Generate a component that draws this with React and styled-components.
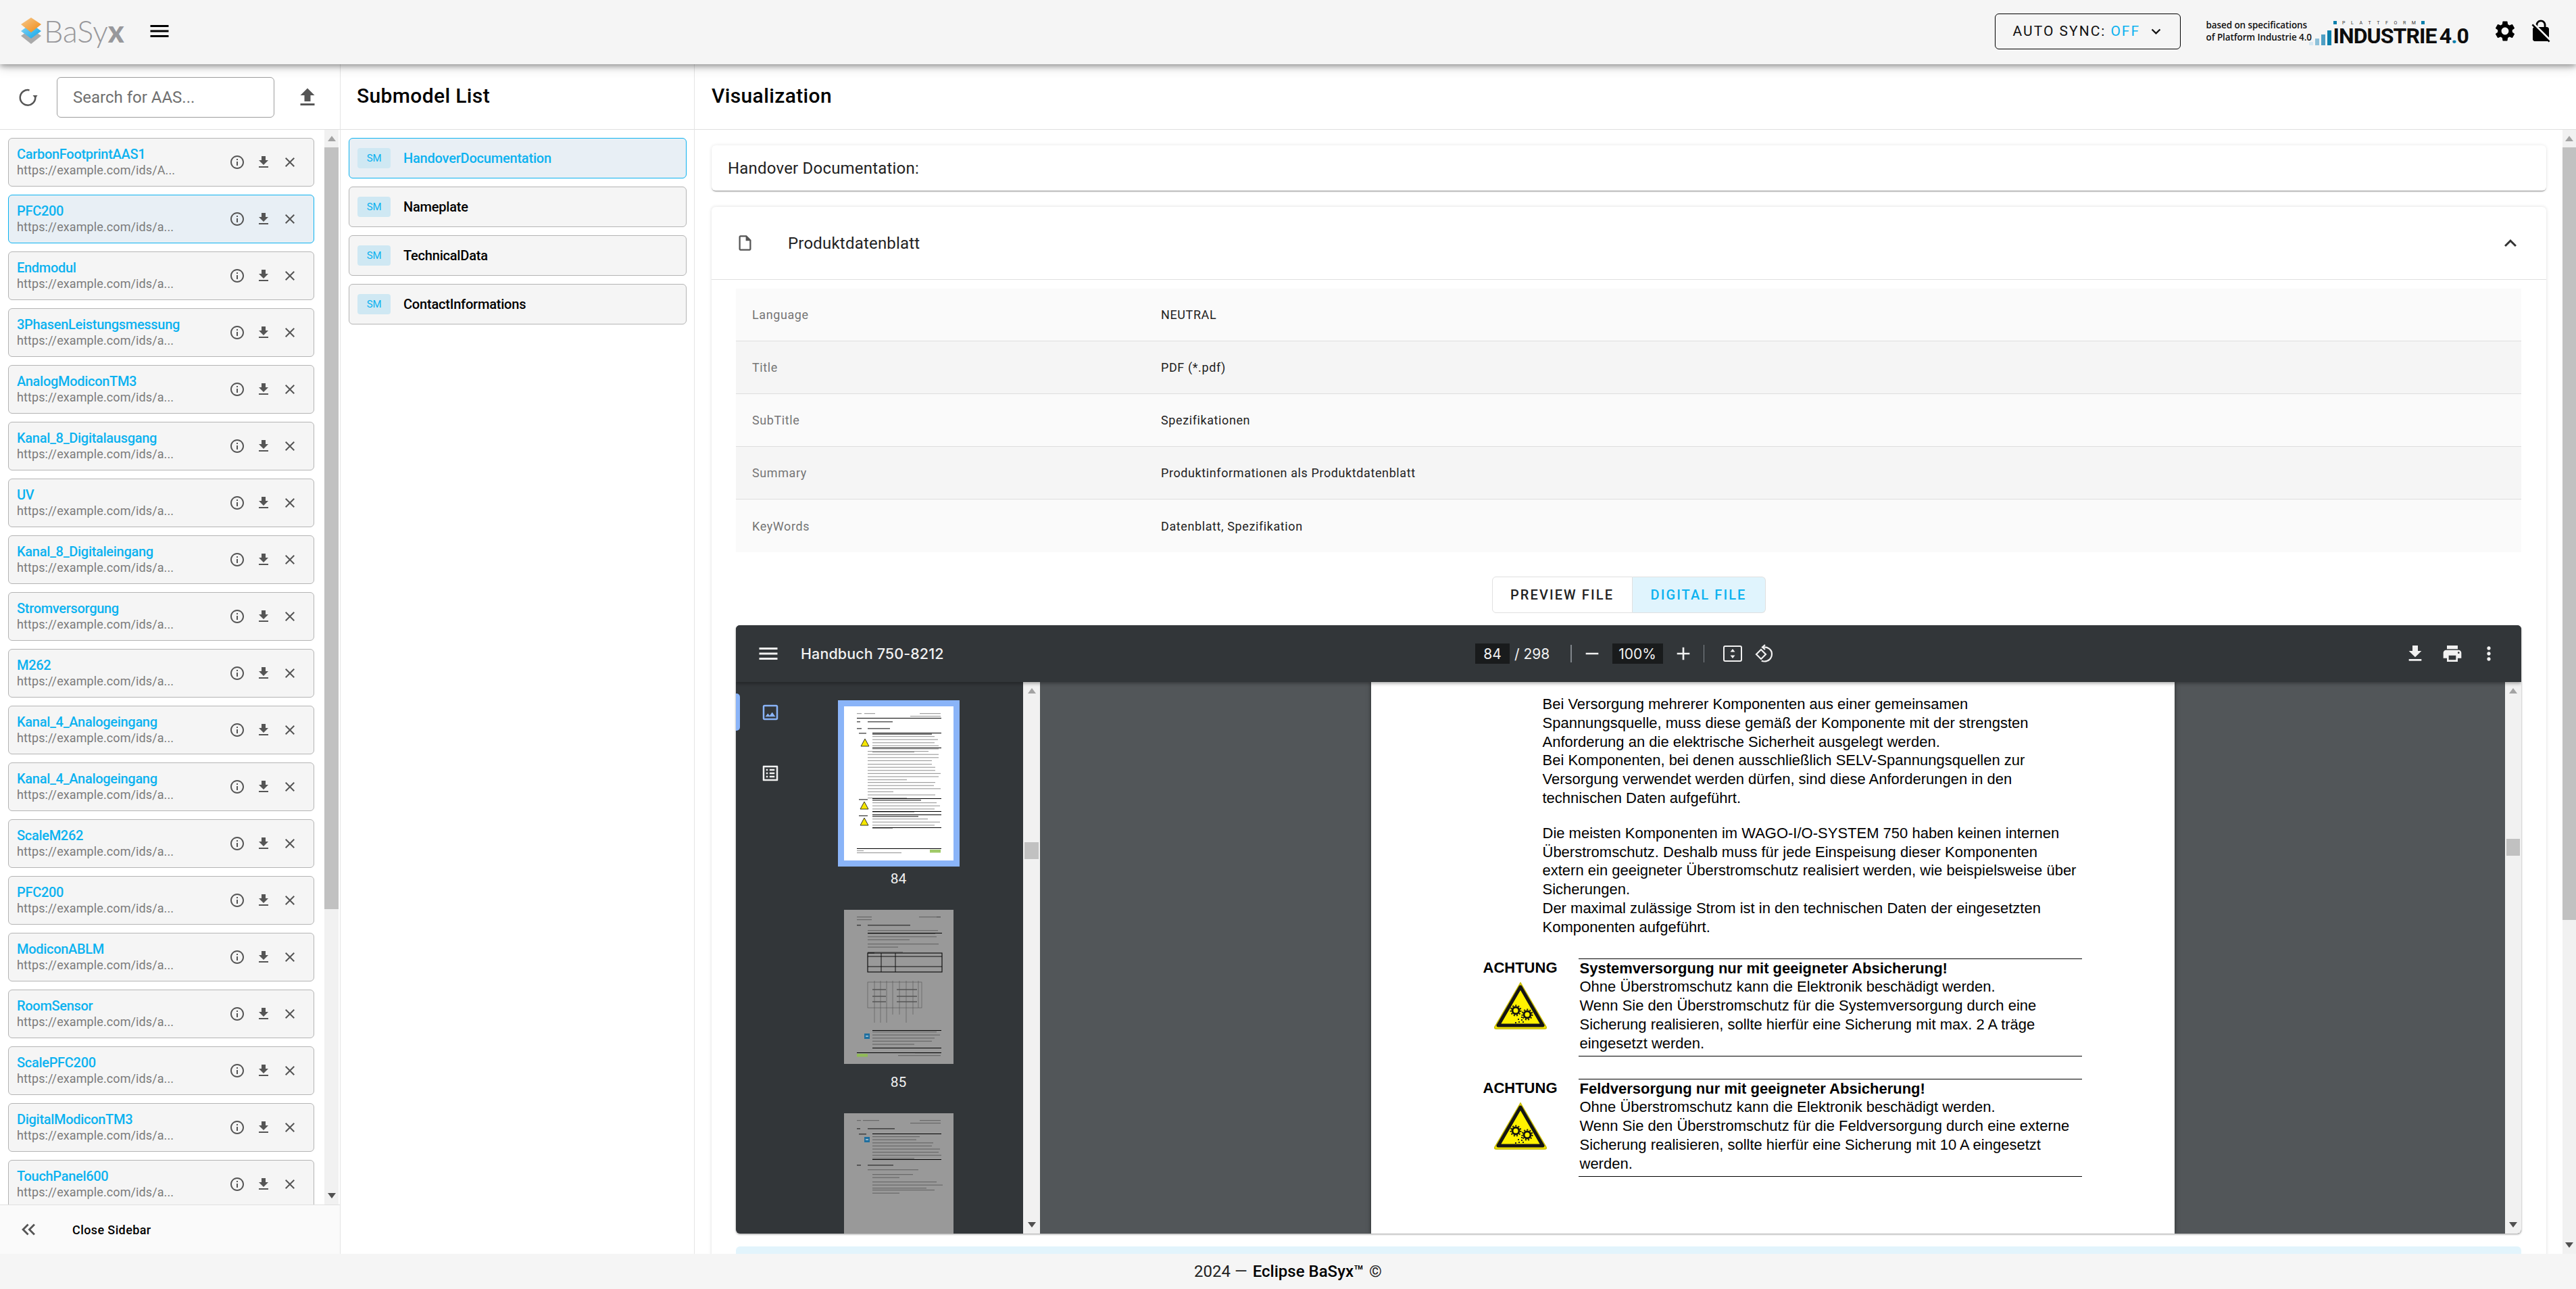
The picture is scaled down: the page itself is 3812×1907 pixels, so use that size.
import styled, { createGlobalStyle } from 'styled-components'
import {
  MdMenu, MdFileUpload, MdFileDownload, MdInfoOutline, MdClose, MdSettings, MdNoEncryption,
  MdKeyboardArrowDown, MdExpandLess, MdOutlineInsertDriveFile, MdKeyboardDoubleArrowLeft, MdPrint, MdMoreVert,
  MdOutlineImage, MdOutlineListAlt, MdRemove, MdAdd,
} from 'react-icons/md'

const PRIMARY = '#0cb2f0'

const Global = createGlobalStyle`
  html, body { margin: 0; padding: 0; background: #fff; }
  body { font-family: Roboto, "Liberation Sans", sans-serif; color: #000; }
  * { box-sizing: border-box; }
`

const Shell = styled.div`
  width: 3812px;
  height: 1907px;
  display: flex;
  flex-direction: column;
  overflow: hidden;
`

// top bar
const TopBar = styled.header`
  height: 95px;
  flex: none;
  display: flex;
  align-items: center;
  background: #f5f5f5;
  box-shadow: 0 3px 8px rgba(0, 0, 0, .35), 0 6px 16px rgba(0, 0, 0, .12);
  position: relative;
  z-index: 2;
  padding: 0 34px 3px 31px;
`
const LogoWrap = styled.div`
  display: flex;
  align-items: center;
  width: 187px;
`
const LogoText = styled.span`
  font-family: Lato, sans-serif;
  font-weight: 300;
  font-size: 45px;
  line-height: 1;
  color: #98989b;
  margin-left: 4px;
  b { font-weight: 900; }
`
const MenuButton = styled(MdMenu)`
  font-size: 36px;
  color: #000;
`
const Spacer = styled.div`
  flex: 1;
`
const SyncButton = styled.div`
  width: 275px;
  height: 53px;
  border: 1.5px solid #000;
  border-radius: 6px;
  display: flex;
  align-items: center;
  padding-left: 26px;
  font-size: 21px;
  font-weight: 400;
  letter-spacing: 2px;
  color: #111;
  margin-right: 38px;
  white-space: nowrap;
  span { color: ${PRIMARY}; margin-left: 7px; }
  svg { font-size: 27px; margin-left: 10px; }
`
const SpecText = styled.div`
  font-family: "Open Sans", sans-serif;
  font-weight: 600;
  font-size: 13.5px;
  line-height: 18px;
  color: #111;
  width: 152px;
  white-space: nowrap;
  letter-spacing: -.1px;
`
const I40Wrap = styled.div`
  display: flex;
  align-items: flex-end;
  height: 44px;
  margin-right: 36px;
`
const I40Bars = styled.div`
  display: flex;
  align-items: flex-end;
  gap: 3px;
  height: 24px;
  margin-bottom: 1px;
  margin-right: 3px;
`
const I40Bar = styled.i`
  display: block;
  width: 6px;
  height: ${p => p.$h}px;
  background: ${p => p.$c};
`
const I40Stack = styled.div`
  display: flex;
  flex-direction: column;
`
const I40Small = styled.div`
  display: flex;
  align-items: center;
  justify-content: space-between;
  font-size: 7px;
  height: 9px;
  width: 136px;
  color: #333;
  i { display: block; width: 5px; height: 5px; background: #0b7fab; }
`
const I40Main = styled.div`
  font-family: Roboto, sans-serif;
  font-weight: 700;
  font-size: 32px;
  line-height: 30px;
  letter-spacing: -.9px;
  white-space: nowrap;
  color: #0d0d0d;
  em { font-style: normal; color: #0b7fab; }
  span { margin-left: 4px; }
`
const BarIcon = styled.span`
  display: flex;
  font-size: 36px;
  margin-left: ${p => p.$ml || 0}px;
  color: #000;
`

// columns
const Body = styled.div`
  flex: 1;
  min-height: 0;
  display: flex;
`
const Sidebar = styled.aside`
  width: 504px;
  flex: none;
  display: flex;
  flex-direction: column;
  border-right: 1.5px solid #e4e4e4;
`
const SideTop = styled.div`
  height: 97px;
  flex: none;
  display: flex;
  align-items: center;
  border-bottom: 1.5px solid #e0e0e0;
  padding-top: 1px;
`
const RefreshWrap = styled.span`
  display: flex;
  width: 30px;
  margin: 0 3px 0 26px;
  flex: none;
  color: #555;
`
const SearchBox = styled.div`
  width: 322px;
  height: 60px;
  margin-left: 25px;
  border: 1.5px solid #9e9e9e;
  border-radius: 6px;
  display: flex;
  align-items: center;
  padding-left: 23px;
  font-size: 24px;
  color: #6f6f6f;
`
const UploadIcon = styled(MdFileUpload)`
  font-size: 36px;
  color: #555;
  margin-left: 31px;
`
const SideMiddle = styled.div`
  flex: 1;
  min-height: 0;
  display: flex;
`
const AasList = styled.div`
  flex: 1;
  min-width: 0;
  overflow: hidden;
  padding: 12px 15px 0 12px;
  display: flex;
  flex-direction: column;
  gap: 12px;
`
const AasCard = styled.div`
  flex: none;
  height: 72px;
  border-radius: 6px;
  border: 1.5px solid ${p => (p.$active ? PRIMARY : '#b4b4b4')};
  background: ${p => (p.$active ? '#e8eff5' : '#f5f5f5')};
  display: flex;
  align-items: center;
  padding-left: 12px;
`
const AasText = styled.div`
  width: 250px;
  flex: none;
  min-width: 0;
`
const AasName = styled.div`
  font-size: 20px;
  font-weight: 500;
  line-height: 24px;
  letter-spacing: -.3px;
  color: ${PRIMARY};
  white-space: nowrap;
`
const AasUrl = styled.div`
  font-size: 18px;
  line-height: 24px;
  letter-spacing: .1px;
  color: #7b7b7b;
  white-space: nowrap;
  overflow: hidden;
`
const AasActions = styled.div`
  display: flex;
  align-items: center;
  margin-left: 64px;
  gap: 15px;
  color: #555;
  font-size: 24px;
  svg { display: block; }
`
const SideBottom = styled.div`
  height: 73px;
  flex: none;
  background: #fafafa;
  border-top: 1.5px solid #e0e0e0;
  display: flex;
  align-items: center;
  font-size: 18px;
  font-weight: 500;
  letter-spacing: .4px;
  svg { font-size: 34px; color: #555; margin-left: 25px; margin-right: 48px; }
`

const SubmodelCol = styled.section`
  width: 524px;
  flex: none;
  display: flex;
  flex-direction: column;
  border-right: 1.5px solid #e4e4e4;
`
const ColTitle = styled.div`
  height: 97px;
  flex: none;
  display: flex;
  align-items: center;
  border-bottom: 1.5px solid #e0e0e0;
  padding: 0 0 3px ${p => p.$pl}px;
  font-size: 30px;
  font-weight: 500;
  letter-spacing: .37px;
`
const SubmodelList = styled.div`
  padding: 12px 11px 0 12px;
  display: flex;
  flex-direction: column;
  gap: 12px;
`
const SubmodelCard = styled.div`
  height: 60px;
  border-radius: 6px;
  border: 1.5px solid ${p => (p.$active ? PRIMARY : '#b4b4b4')};
  background: ${p => (p.$active ? '#e8eff5' : '#f5f5f5')};
  color: ${p => (p.$active ? PRIMARY : '#000')};
  display: flex;
  align-items: center;
  padding-left: 12px;
  font-size: 20px;
  font-weight: 500;
  letter-spacing: -.2px;
`
const SmChip = styled.span`
  width: 49px;
  height: 30px;
  border-radius: 4px;
  background: #cfe8f3;
  color: ${PRIMARY};
  font-size: 15px;
  font-weight: 400;
  display: flex;
  align-items: center;
  justify-content: center;
  margin-right: 19px;
`

// scroll rails
const Rail = styled.div`
  width: ${p => p.$w}px;
  flex: none;
  display: flex;
  flex-direction: column;
  background: #f1f1f1;
  margin-right: ${p => p.$mr || 0}px;
`
const RailArrow = styled.div`
  height: 26px;
  flex: none;
  display: flex;
  align-items: center;
  justify-content: center;
  &::before {
    content: '';
    border-left: 6px solid transparent;
    border-right: 6px solid transparent;
    ${p => (p.$down ? 'border-top' : 'border-bottom')}: 8px solid ${p => (p.$dim ? '#a3a3a3' : '#505050')};
  }
`
const RailGap = styled.div`
  flex: ${p => (p.$h ? 'none' : 1)};
  height: ${p => p.$h || 0}px;
`
const RailThumb = styled.div`
  flex: none;
  height: ${p => p.$h}px;
  margin: 0 ${p => p.$inset || 0}px;
  background: #c1c1c1;
`

// main
const Main = styled.main`
  flex: 1;
  min-width: 0;
  display: flex;
  flex-direction: column;
`
const MainScroll = styled.div`
  flex: 1;
  min-height: 0;
  display: flex;
`
const Content = styled.div`
  flex: 1;
  min-width: 0;
  overflow: hidden;
  padding: 23px 24px 0 25px;
  display: flex;
  flex-direction: column;
`
const TitleCard = styled.div`
  height: 67px;
  flex: none;
  border-radius: 6px;
  background: #fff;
  box-shadow: 0 2px 2px -1px rgba(0,0,0,.45), 0 0 5px rgba(0,0,0,.1);
  display: flex;
  align-items: center;
  padding-left: 24px;
  font-size: 24px;
  color: #222;
  letter-spacing: .2px;
`
const DocCard = styled.div`
  margin-top: 24px;
  flex: none;
  border-radius: 6px 6px 0 0;
  background: #fff;
  box-shadow: 0 0 5px rgba(0,0,0,.14);
  padding-bottom: 30px;
`
const DocHead = styled.div`
  height: 108px;
  display: flex;
  align-items: center;
  border-bottom: 1.5px solid #e0e0e0;
  padding-left: 36px;
  padding-right: 36px;
  font-size: 24px;
  color: #222;
  letter-spacing: .2px;
  svg:first-child { font-size: 27px; color: #555; margin-right: 50px; }
  svg:last-child { font-size: 36px; color: #333; margin-left: auto; margin-right: -1px; }
`
const DocBody = styled.div`
  padding: 13px 37px 0 36px;
  display: flex;
  flex-direction: column;
`
const PropTable = styled.div`
  display: flex;
  flex-direction: column;
`
const PropRow = styled.div`
  height: 78px;
  display: grid;
  grid-template-columns: 605px 1fr;
  align-items: center;
  padding-left: 24px;
  background: ${p => (p.$alt ? '#f5f5f5' : '#fafafa')};
  border-bottom: ${p => (p.$last ? 'none' : '1.5px solid #dedede')};
  font-size: 18px;
  letter-spacing: .6px;
`
const PropLabel = styled.span`
  color: #757575;
`
const PropValue = styled.span`
  color: #222;
`
const ToggleRow = styled.div`
  display: flex;
  justify-content: center;
  margin: 36px 0 18px;
`
const ToggleBtn = styled.div`
  height: 54px;
  width: ${p => p.$w}px;
  display: flex;
  align-items: center;
  justify-content: center;
  font-size: 20px;
  font-weight: 500;
  letter-spacing: 2.1px;
  border: 1.5px solid #e0e0e0;
  color: ${p => (p.$on ? PRIMARY : '#222')};
  background: ${p => (p.$on ? '#e0f4fd' : '#fff')};
  border-radius: ${p => (p.$on ? '0 6px 6px 0' : '6px 0 0 6px')};
  border-left: ${p => (p.$on ? 'none' : '1.5px solid #e0e0e0')};
`
const InfoStrip = styled.div`
  margin-top: 19px;
  height: 50px;
  border-radius: 6px;
  background: #e2f4fc;
`

// pdf viewer
const Viewer = styled.div`
  height: 900px;
  border-radius: 6px;
  overflow: hidden;
  display: flex;
  flex-direction: column;
  background: #323639;
  box-shadow: 0 1px 3px rgba(0,0,0,.4);
`
const PdfBar = styled.div`
  height: 84px;
  flex: none;
  display: flex;
  align-items: center;
  color: #f1f1f1;
  position: relative;
  z-index: 1;
  box-shadow: 0 2px 5px rgba(0,0,0,.35);
  background: #323639;
  font-family: Inter, Roboto, sans-serif;
`
const PdfTitle = styled.div`
  font-size: 21.5px;
  font-weight: 500;
  width: 998px;
  margin-left: 30px;
  white-space: nowrap;
  letter-spacing: .1px;
`
const PdfMenu = styled(MdMenu)`
  font-size: 36px;
  margin-left: 30px;
  flex: none;
`
const PdfField = styled.span`
  width: ${p => p.$w}px;
  height: 30px;
  margin-left: ${p => p.$ml || 0}px;
  background: #191b1c;
  display: flex;
  align-items: center;
  justify-content: center;
  font-size: 21px;
  flex: none;
`
const PdfText = styled.span`
  font-size: 21px;
  margin-left: 7px;
  width: 83px;
  flex: none;
`
const PdfSep = styled.i`
  display: block;
  width: 1.5px;
  height: 26px;
  background: #80868b;
  flex: none;
  margin: 0 ${p => p.$mr || 0}px 0 ${p => p.$ml || 0}px;
`
const PdfIcon = styled.span`
  display: flex;
  font-size: ${p => p.$size || 30}px;
  margin-left: ${p => p.$ml || 0}px;
  margin-right: ${p => p.$mr || 0}px;
  flex: none;
  color: #f1f1f1;
`
const PdfBody = styled.div`
  flex: 1;
  min-height: 0;
  display: flex;
`
const PdfSide = styled.div`
  width: 425px;
  flex: none;
  display: flex;
  overflow: hidden;
`
const PdfTabs = styled.div`
  width: 102px;
  flex: none;
  padding-top: 17px;
  display: flex;
  flex-direction: column;
  gap: 35px;
`
const PdfTab = styled.div`
  height: 55px;
  position: relative;
  display: flex;
  align-items: center;
  justify-content: center;
  font-size: 30px;
  color: ${p => (p.$on ? '#8ab4f8' : '#f1f1f1')};
  &::before {
    content: '';
    display: ${p => (p.$on ? 'block' : 'none')};
    position: absolute;
    left: 0;
    top: 0;
    bottom: 0;
    width: 6px;
    border-radius: 0 5px 5px 0;
    background: #8ab4f8;
  }
`
const ThumbCol = styled.div`
  flex: 1;
  min-width: 0;
  padding: 27px 46px 0 0;
  display: flex;
  flex-direction: column;
  align-items: center;
`
const ThumbFrame = styled.div`
  border: 9px solid ${p => (p.$on ? '#8ab4f8' : 'transparent')};
  flex: none;
  line-height: 0;
`
const ThumbLabel = styled.div`
  height: 36px;
  margin-bottom: 19px;
  flex: none;
  display: flex;
  align-items: center;
  justify-content: center;
  font-size: 21px;
  color: #f1f1f1;
`
const PdfPane = styled.div`
  flex: 1;
  min-width: 0;
  background: #525659;
  display: flex;
  justify-content: center;
  overflow: hidden;
`
const PdfPage = styled.div`
  width: 1189px;
  flex: none;
  background: #fff;
  box-shadow: 0 0 6px rgba(0,0,0,.5);
  padding: 19px 137px 0 166px;
  font-family: "Liberation Sans", Arial, sans-serif;
  font-size: 22px;
  line-height: 27.8px;
  color: #000;
  white-space: nowrap;
`
const PageParagraph = styled.p`
  margin: 0 0 24px 88px;
`
const Notice = styled.div`
  display: grid;
  grid-template-columns: 110px 1fr;
  column-gap: 31px;
  margin-top: ${p => p.$mt}px;
`
const NoticeSide = styled.div`
  display: flex;
  flex-direction: column;
  align-items: center;
  font-weight: 700;
  svg { margin-top: 7px; }
`
const NoticeBody = styled.div`
  border-top: 1px solid #000;
  border-bottom: 1px solid #000;
  padding-left: 2px;
  height: 145px;
  b { display: block; }
`

const Footer = styled.footer`
  height: 52px;
  flex: none;
  background: #f5f5f5;
  display: flex;
  align-items: center;
  justify-content: center;
  font-size: 24px;
  color: #222;
  b { font-weight: 500; color: #000; margin: 0 8px; }
`

function BasyxMark() {
  return (
    <svg width="30" height="40" viewBox="0 0 30 40">
      <defs>
        <linearGradient id="org" x1="0" y1="0" x2="1" y2="1">
          <stop offset="0" stopColor="#f6c98e" />
          <stop offset="1" stopColor="#f08a12" />
        </linearGradient>
        <linearGradient id="blu" x1="0" y1="0" x2="1" y2="1">
          <stop offset="0" stopColor="#8ed6f5" />
          <stop offset="1" stopColor="#0ba5e8" />
        </linearGradient>
      </defs>
      <path d="M15 17 L30 27 L15 39 L0 27 Z" fill="#a9a9a9" />
      <path d="M15 9 L30 20 L15 31 L0 20 Z" fill="url(#blu)" />
      <path d="M15 0 L30 10 L15 22 L0 10 Z" fill="url(#org)" />
    </svg>
  )
}

function RefreshGlyph() {
  return (
    <svg width="30" height="30" viewBox="0 0 36 36" fill="none" stroke="currentColor" strokeWidth="3">
      <path d="M21 5.3 A13.5 13.5 0 1 0 31.5 18" />
      <path d="M27 14.5 L31.5 20 L35.5 14.5" fill="currentColor" stroke="none" />
    </svg>
  )
}

function WarnSign() {
  const gear = (cx, cy, r) => (
    <g key={cx}>
      <circle cx={cx} cy={cy} r={r} fill="none" stroke="#111" strokeWidth="3" />
      <circle cx={cx} cy={cy} r={r + 2.5} fill="none" stroke="#111" strokeWidth="2" strokeDasharray="2 2.3" />
    </g>
  )
  return (
    <svg width="80" height="71" viewBox="0 0 80 71">
      <path d="M40 2 L78 67 Q79 70 76 70 L4 70 Q1 70 2 67 Z" fill="#f5e600" stroke="#c8bc00" strokeWidth="1.5" />
      <path d="M40 8 L73 65 L7 65 Z" fill="#fff200" stroke="#141414" strokeWidth="5" strokeLinejoin="round" />
      {gear(33, 43, 5)}
      {gear(50, 49, 5)}
      <path d="M32 61h2M37 60h2M41 57h2M36 56h2M43 60h2M41 53h2" stroke="#222" strokeWidth="2" />
    </svg>
  )
}

// little page pictures for the thumbnail strip: [x, y, width] in page units
const column = (x, y, widths, pitch = 4.6) => widths.map((w, i) => [x, y + i * pitch, w])

const PAGE_84 = {
  rules: [[19, 17, 125], [42, 39, 102], [42, 61, 102], [42, 136, 102], [42, 155, 102], [42, 160, 102], [42, 179, 102], [19, 210, 125]],
  bold: [[19, 22, 5], [35, 22, 37], [19, 32, 7], [35, 32, 33], [42, 40.5, 88], [22, 39, 11], [42, 138, 72], [42, 162, 68], [22, 137, 13], [22, 161, 13]],
  text: [
    [19, 10, 7], [30, 10, 16], [112, 10, 31], [98, 14, 45],
    ...column(42, 44, [92, 97, 92, 98, 98, 62]),
    ...column(35, 66, [90, 105, 105, 95]),
    ...column(35, 85, [95, 100, 100, 108, 105, 58]),
    ...column(35, 112, [100, 98, 108, 38, 100, 58]),
    ...column(42, 142, [95, 100, 92, 62]),
    ...column(42, 166, [82, 100, 92, 30]),
    [19, 213, 10], [19, 216, 66],
  ],
  signs: [[31, 48], [30, 141], [30, 165]],
  brand: [127, 212, 16],
}
const PAGE_85 = {
  rules: [[35, 34, 110], [42, 178, 102], [42, 204, 102], [19, 211, 125]],
  bold: [[19, 22, 6], [35, 22, 63], [35, 63, 10]],
  text: [
    [19, 10, 22], [19, 14, 22], [111, 10, 32], [137, 10, 6],
    ...column(35, 30, [104, 100, 102, 62]),
    ...column(35, 50, [105, 45]),
    [35, 62, 52],
    ...column(42, 180, [95, 100, 92, 88, 62]),
    [80, 215, 63], [105, 211, 38],
  ],
  table: [35, 64, 110, 28],
  diagram: [35, 105, 80, 60],
  info: [30, 183],
  brand: [19, 213, 16],
}
const PAGE_86 = {
  rules: [[42, 30, 102], [42, 68, 102]],
  bold: [[19, 22, 5], [35, 22, 40], [19, 76, 6], [35, 76, 38], [22, 30, 11]],
  text: [
    [19, 10, 6], [28, 10, 24], [112, 10, 31], [98, 14, 45],
    ...column(42, 34, [70, 65, 90, 88, 100, 98, 102, 62]),
    ...column(35, 83, [75]),
    ...column(42, 90, [60, 40]),
    ...column(42, 101, [95, 104, 80]),
    ...column(42, 113, [92, 40]),
  ],
  info: [30, 35],
}

function PageThumb({ page, dim, h = 228 }) {
  const ink = dim ? '#3a3a3a' : '#444'
  return (
    <svg width="162" height={h} viewBox={`0 0 162 ${h}`}>
      <rect width="162" height="228" fill={dim ? '#999999' : '#fff'} />
      {page.text.map(([x, y, w], i) => (
        <rect key={i} x={x} y={y} width={w} height="1.2" fill={ink} opacity=".5" />
      ))}
      {page.bold.map(([x, y, w], i) => (
        <rect key={i} x={x} y={y} width={w} height="1.6" fill="#222" opacity=".7" />
      ))}
      {page.rules.map(([x, y, w], i) => (
        <rect key={i} x={x} y={y} width={w} height="1" fill="#000" />
      ))}
      {page.signs && page.signs.map(([x, y], i) => (
        <path key={i} d={`M${x} ${y} l6 11 h-12 Z`} fill="#f5e600" stroke="#222" strokeWidth=".9" />
      ))}
      {page.table && (
        <g fill="none" stroke="#111">
          <rect x={page.table[0]} y={page.table[1]} width={page.table[2]} height={page.table[3]} strokeWidth="1.2" />
          <path d="M55 64v28M76 64v28M35 69h110M35 84h110" strokeWidth="1" />
        </g>
      )}
      {page.diagram && (
        <g fill="none" stroke="#555" strokeWidth=".6">
          <rect x={page.diagram[0]} y={page.diagram[1] + 2} width={page.diagram[2]} height="38" />
          <path d="M45 105v62M54 105v62M63 105v62M72 105v50M82 105v50M92 105v62M102 105v50M110 105v40" />
          <path d="M42 118h20M42 128h20M42 136h20M78 118h30M78 128h30M78 136h30" strokeWidth="1.6" />
        </g>
      )}
      {page.info && (
        <g>
          <rect x={page.info[0]} y={page.info[1]} width="8" height="8" fill="#1f6f9f" />
          <path d={`M${page.info[0] + 2} ${page.info[1] + 4}h4`} stroke="#fff" strokeWidth="1" />
        </g>
      )}
      {page.brand && (
        <rect x={page.brand[0]} y={page.brand[1]} width={page.brand[2]} height="4.5" fill="#8fbf4d" opacity=".85" />
      )}
    </svg>
  )
}

function ScrollRail({ w, before, thumb, inset, mr, dim }) {
  return (
    <Rail $w={w} $mr={mr}>
      <RailArrow $dim={dim} />
      {before > 0 && <RailGap $h={before} />}
      <RailThumb $h={thumb} $inset={inset} />
      <RailGap />
      <RailArrow $down />
    </Rail>
  )
}

const AAS = [
  ['CarbonFootprintAAS1', 'https://example.com/ids/A...'],
  ['PFC200', 'https://example.com/ids/a...'],
  ['Endmodul', 'https://example.com/ids/a...'],
  ['3PhasenLeistungsmessung', 'https://example.com/ids/a...'],
  ['AnalogModiconTM3', 'https://example.com/ids/a...'],
  ['Kanal_8_Digitalausgang', 'https://example.com/ids/a...'],
  ['UV', 'https://example.com/ids/a...'],
  ['Kanal_8_Digitaleingang', 'https://example.com/ids/a...'],
  ['Stromversorgung', 'https://example.com/ids/a...'],
  ['M262', 'https://example.com/ids/a...'],
  ['Kanal_4_Analogeingang', 'https://example.com/ids/a...'],
  ['Kanal_4_Analogeingang', 'https://example.com/ids/a...'],
  ['ScaleM262', 'https://example.com/ids/a...'],
  ['PFC200', 'https://example.com/ids/a...'],
  ['ModiconABLM', 'https://example.com/ids/a...'],
  ['RoomSensor', 'https://example.com/ids/a...'],
  ['ScalePFC200', 'https://example.com/ids/a...'],
  ['DigitalModiconTM3', 'https://example.com/ids/a...'],
  ['TouchPanel600', 'https://example.com/ids/a...'],
]

const SUBMODELS = ['HandoverDocumentation', 'Nameplate', 'TechnicalData', 'ContactInformations']

const PROPS = [
  ['Language', 'NEUTRAL'],
  ['Title', 'PDF (*.pdf)'],
  ['SubTitle', 'Spezifikationen'],
  ['Summary', 'Produktinformationen als Produktdatenblatt'],
  ['KeyWords', 'Datenblatt, Spezifikation'],
]

export default function App() {
  return (
    <Shell>
      <Global />
      <TopBar>
        <LogoWrap>
          <BasyxMark />
          <LogoText>BaSy<b>x</b></LogoText>
        </LogoWrap>
        <MenuButton />
        <Spacer />
        <SyncButton>AUTO SYNC:<span>OFF</span><MdKeyboardArrowDown /></SyncButton>
        <SpecText>based on specifications<br />of Platform Industrie 4.0</SpecText>
        <I40Wrap>
          <I40Bars>
            <I40Bar $h={5} $c="#d5e8f2" />
            <I40Bar $h={10} $c="#8dc0d9" />
            <I40Bar $h={16} $c="#4e9fc4" />
            <I40Bar $h={22} $c="#0b7fab" />
          </I40Bars>
          <I40Stack>
            <I40Small>
              <i />{'PLATTFORM'.split('').map((c, i) => <span key={i}>{c}</span>)}<i />
            </I40Small>
            <I40Main>INDUSTRIE<span>4<em>.</em>0</span></I40Main>
          </I40Stack>
        </I40Wrap>
        <BarIcon><MdSettings /></BarIcon>
        <BarIcon $ml={17}><MdNoEncryption /></BarIcon>
      </TopBar>

      <Body>
        <Sidebar>
          <SideTop>
            <RefreshWrap><RefreshGlyph /></RefreshWrap>
            <SearchBox>Search for AAS...</SearchBox>
            <UploadIcon />
          </SideTop>
          <SideMiddle>
            <AasList>
              {AAS.map(([name, url], i) => (
                <AasCard key={i} $active={i === 1}>
                  <AasText>
                    <AasName>{name}</AasName>
                    <AasUrl>{url}</AasUrl>
                  </AasText>
                  <AasActions>
                    <MdInfoOutline />
                    <MdFileDownload />
                    <MdClose />
                  </AasActions>
                </AasCard>
              ))}
            </AasList>
            <ScrollRail w={21} mr={2} before={0} thumb={1127} dim />
          </SideMiddle>
          <SideBottom><MdKeyboardDoubleArrowLeft />Close Sidebar</SideBottom>
        </Sidebar>

        <SubmodelCol>
          <ColTitle $pl={24}>Submodel List</ColTitle>
          <SubmodelList>
            {SUBMODELS.map((name, i) => (
              <SubmodelCard key={name} $active={i === 0}>
                <SmChip>SM</SmChip>{name}
              </SubmodelCard>
            ))}
          </SubmodelList>
        </SubmodelCol>

        <Main>
          <ColTitle $pl={25}>Visualization</ColTitle>
          <MainScroll>
            <Content>
              <TitleCard>Handover Documentation:</TitleCard>
              <DocCard>
                <DocHead>
                  <MdOutlineInsertDriveFile />
                  Produktdatenblatt
                  <MdExpandLess />
                </DocHead>
                <DocBody>
                  <PropTable>
                    {PROPS.map(([label, value], i) => (
                      <PropRow key={label} $alt={i % 2 === 1} $last={i === PROPS.length - 1}>
                        <PropLabel>{label}</PropLabel>
                        <PropValue>{value}</PropValue>
                      </PropRow>
                    ))}
                  </PropTable>
                  <ToggleRow>
                    <ToggleBtn $w={208}>PREVIEW FILE</ToggleBtn>
                    <ToggleBtn $w={197} $on>DIGITAL FILE</ToggleBtn>
                  </ToggleRow>
                  <Viewer>
                    <PdfBar>
                      <PdfMenu />
                      <PdfTitle>Handbuch 750-8212</PdfTitle>
                      <PdfField $w={51}>84</PdfField>
                      <PdfText>/ 298</PdfText>
                      <PdfSep />
                      <PdfIcon $ml={14} $size={32}><MdRemove /></PdfIcon>
                      <PdfField $w={75} $ml={14}>100%</PdfField>
                      <PdfIcon $ml={14} $size={32}><MdAdd /></PdfIcon>
                      <PdfSep $ml={14} />
                      <PdfIcon $ml={28}>
                        <svg width="28" height="24" viewBox="0 0 28 24" fill="none" stroke="currentColor">
                          <rect x="1" y="1" width="26" height="22" rx="2" strokeWidth="2" />
                          <path d="M14 5l-3.5 4.5h7zM14 19l-3.5-4.5h7z" fill="currentColor" stroke="none" />
                        </svg>
                      </PdfIcon>
                      <PdfIcon $ml={19}>
                        <svg width="28" height="28" viewBox="0 0 28 28" fill="none" stroke="currentColor" strokeWidth="2.2">
                          <path d="M9 8l-7 7 7 7 7-7z" />
                          <path d="M12 4.5c6.5-.8 13 3 13 10s-5.5 11-11 11c-1.5 0-3-.3-4.2-1" />
                          <path d="M15 1l-4 3.5 4 3.5" />
                        </svg>
                      </PdfIcon>
                      <Spacer />
                      <PdfIcon $size={32}><MdFileDownload /></PdfIcon>
                      <PdfIcon $ml={23} $size={32}><MdPrint /></PdfIcon>
                      <PdfIcon $ml={22} $mr={32} $size={32}><MdMoreVert /></PdfIcon>
                    </PdfBar>
                    <PdfBody>
                      <PdfSide>
                        <PdfTabs>
                          <PdfTab $on><MdOutlineImage /></PdfTab>
                          <PdfTab><MdOutlineListAlt /></PdfTab>
                        </PdfTabs>
                        <ThumbCol>
                          <ThumbFrame $on><PageThumb page={PAGE_84} /></ThumbFrame>
                          <ThumbLabel>84</ThumbLabel>
                          <ThumbFrame><PageThumb page={PAGE_85} dim /></ThumbFrame>
                          <ThumbLabel>85</ThumbLabel>
                          <ThumbFrame><PageThumb page={PAGE_86} dim /></ThumbFrame>
                        </ThumbCol>
                      </PdfSide>
                      <ScrollRail w={25} before={211} thumb={25} inset={2} dim />
                      <PdfPane>
                        <PdfPage>
                          <PageParagraph>
                            Bei Versorgung mehrerer Komponenten aus einer gemeinsamen<br />
                            Spannungsquelle, muss diese gemäß der Komponente mit der strengsten<br />
                            Anforderung an die elektrische Sicherheit ausgelegt werden.<br />
                            Bei Komponenten, bei denen ausschließlich SELV-Spannungsquellen zur<br />
                            Versorgung verwendet werden dürfen, sind diese Anforderungen in den<br />
                            technischen Daten aufgeführt.
                          </PageParagraph>
                          <PageParagraph>
                            Die meisten Komponenten im WAGO-I/O-SYSTEM 750 haben keinen internen<br />
                            Überstromschutz. Deshalb muss für jede Einspeisung dieser Komponenten<br />
                            extern ein geeigneter Überstromschutz realisiert werden, wie beispielsweise über<br />
                            Sicherungen.<br />
                            Der maximal zulässige Strom ist in den technischen Daten der eingesetzten<br />
                            Komponenten aufgeführt.
                          </PageParagraph>
                          <Notice $mt={32}>
                            <NoticeSide>ACHTUNG<WarnSign /></NoticeSide>
                            <NoticeBody>
                              <b>Systemversorgung nur mit geeigneter Absicherung!</b>
                              Ohne Überstromschutz kann die Elektronik beschädigt werden.<br />
                              Wenn Sie den Überstromschutz für die Systemversorgung durch eine<br />
                              Sicherung realisieren, sollte hierfür eine Sicherung mit max. 2 A träge<br />
                              eingesetzt werden.
                            </NoticeBody>
                          </Notice>
                          <Notice $mt={33}>
                            <NoticeSide>ACHTUNG<WarnSign /></NoticeSide>
                            <NoticeBody>
                              <b>Feldversorgung nur mit geeigneter Absicherung!</b>
                              Ohne Überstromschutz kann die Elektronik beschädigt werden.<br />
                              Wenn Sie den Überstromschutz für die Feldversorgung durch eine externe<br />
                              Sicherung realisieren, sollte hierfür eine Sicherung mit 10 A eingesetzt<br />
                              werden.
                            </NoticeBody>
                          </Notice>
                        </PdfPage>
                      </PdfPane>
                      <ScrollRail w={24} before={206} thumb={25} inset={2} dim />
                    </PdfBody>
                  </Viewer>
                  <InfoStrip />
                </DocBody>
              </DocCard>
            </Content>
            <ScrollRail w={20} before={0} thumb={1143} dim />
          </MainScroll>
        </Main>
      </Body>

      <Footer>2024 — <b>Eclipse BaSyx™</b> ©</Footer>
    </Shell>
  )
}
